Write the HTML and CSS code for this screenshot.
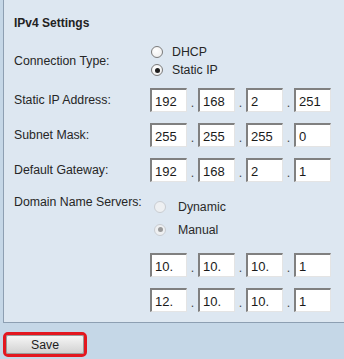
FILE: index.html
```html
<!DOCTYPE html>
<html lang="en">
<head>
    <meta charset="UTF-8">
    <title>IPv4 Settings</title>
    <link rel="stylesheet" href="styles.css">
</head>
<body>
<div class="panel">
    <h2 class="title">IPv4 Settings</h2>

    <div class="row conn">
        <span class="label">Connection Type:</span>
        <div class="options">
            <label class="opt"><input type="radio" name="conn">DHCP</label>
            <label class="opt"><input type="radio" name="conn" checked>Static IP</label>
        </div>
    </div>

    <div class="row ip-row first">
        <span class="label">Static IP Address:</span>
        <div class="ip">
            <input type="text" value="192"><span class="dot">.</span>
            <input type="text" value="168"><span class="dot">.</span>
            <input type="text" value="2"><span class="dot">.</span>
            <input type="text" value="251">
        </div>
    </div>

    <div class="row ip-row">
        <span class="label">Subnet Mask:</span>
        <div class="ip">
            <input type="text" value="255"><span class="dot">.</span>
            <input type="text" value="255"><span class="dot">.</span>
            <input type="text" value="255"><span class="dot">.</span>
            <input type="text" value="0">
        </div>
    </div>

    <div class="row ip-row">
        <span class="label">Default Gateway:</span>
        <div class="ip">
            <input type="text" value="192"><span class="dot">.</span>
            <input type="text" value="168"><span class="dot">.</span>
            <input type="text" value="2"><span class="dot">.</span>
            <input type="text" value="1">
        </div>
    </div>

    <div class="row dns">
        <span class="label">Domain Name Servers:</span>
        <div class="dns-fields">
            <div class="options dns-options">
                <label class="opt"><input type="radio" name="dns" disabled>Dynamic</label>
                <label class="opt"><input type="radio" name="dns" checked disabled>Manual</label>
            </div>
            <div class="ip dns-ip">
                <input type="text" value="10."><span class="dot">.</span>
                <input type="text" value="10."><span class="dot">.</span>
                <input type="text" value="10."><span class="dot">.</span>
                <input type="text" value="1">
            </div>
            <div class="ip dns-ip">
                <input type="text" value="12."><span class="dot">.</span>
                <input type="text" value="10."><span class="dot">.</span>
                <input type="text" value="10."><span class="dot">.</span>
                <input type="text" value="1">
            </div>
        </div>
    </div>
</div>

<div class="save-mark">
    <button type="button" class="save">Save</button>
</div>
</body>
</html>
```

FILE: styles.css
```css
body {
    margin: 0;
    background-color: #c5d7e7;
    font-family: "Liberation Sans", Arial, sans-serif;
    font-size: 12.3px;
    color: #262626;
}

.panel {
    margin-left: 3px;
    padding: 16px 0 10px 10px;
    background-color: #dde7f1;
    border-left: 1px solid #8d9fb2;
    border-bottom: 1px solid #8d9fb2;
}

.title {
    margin: 0;
    font-size: 12px;
    line-height: 14px;
    font-weight: bold;
    color: #222;
}

.row {
    display: grid;
    grid-template-columns: 136px 1fr;
    align-items: center;
}

.label {
    line-height: 14px;
}

.conn {
    margin-top: 13px;
}

.options {
    display: flex;
    flex-direction: column;
}

.opt {
    display: flex;
    align-items: center;
    height: 18px;
    gap: 9px;
}

.opt input {
    appearance: none;
    -webkit-appearance: none;
    width: 12px;
    height: 12px;
    margin: 0 0 0 1px;
    border: 1px solid #7b7b7b;
    border-radius: 50%;
    background: radial-gradient(circle at 40% 35%, #ffffff 0%, #f1f1f1 70%, #dcdcdc 100%);
    position: relative;
}

.opt input:checked::after {
    content: "";
    position: absolute;
    left: 2.5px;
    top: 2.5px;
    width: 5px;
    height: 5px;
    border-radius: 50%;
    background-color: #1e1e1e;
}

.opt input:disabled {
    border-color: #c9cdd2;
    background: #eef0f2;
}

.opt input:disabled:checked::after {
    background-color: #9a9a9a;
}

.ip-row {
    height: 24px;
    margin-top: 11px;
}

.ip-row.first {
    margin-top: 9px;
}

.ip {
    display: flex;
    align-items: center;
    height: 24px;
}

.ip input {
    width: 37px;
    height: 24px;
    box-sizing: border-box;
    margin: 0;
    padding: 2px 0 0 3px;
    font-family: "Liberation Sans", Arial, sans-serif;
    font-size: 13px;
    color: #1a1a1a;
    background-color: #fff;
    border-style: solid;
    border-width: 2px 1px 1px 2px;
    border-color: #808080 #e4e4e4 #e4e4e4 #808080;
    outline: none;
}

.dot {
    width: 11px;
    text-align: center;
    align-self: flex-end;
    line-height: 18px;
    color: #444;
}

.dns {
    margin-top: 13px;
    align-items: start;
}

.dns-options {
    padding-left: 3px;
}

.dns-options .opt {
    height: 23px;
    gap: 12px;
    color: #2a2a2a;
}

.dns-options + .dns-ip {
    margin-top: 12px;
}

.dns-ip + .dns-ip {
    margin-top: 11px;
}

.save-mark {
    display: inline-block;
    margin: 9px 0 0 3px;
    border: 3px solid #e3171f;
    border-radius: 5px;
}

.save {
    display: block;
    width: 78px;
    height: 19px;
    padding: 0;
    font-family: "Liberation Sans", Arial, sans-serif;
    font-size: 12.3px;
    color: #1c1c1c;
    background: linear-gradient(#f6f6f6, #e2e2e2 55%, #d2d2d2);
    border: 1px solid #9a9a9a;
    border-radius: 2px;
}
```
